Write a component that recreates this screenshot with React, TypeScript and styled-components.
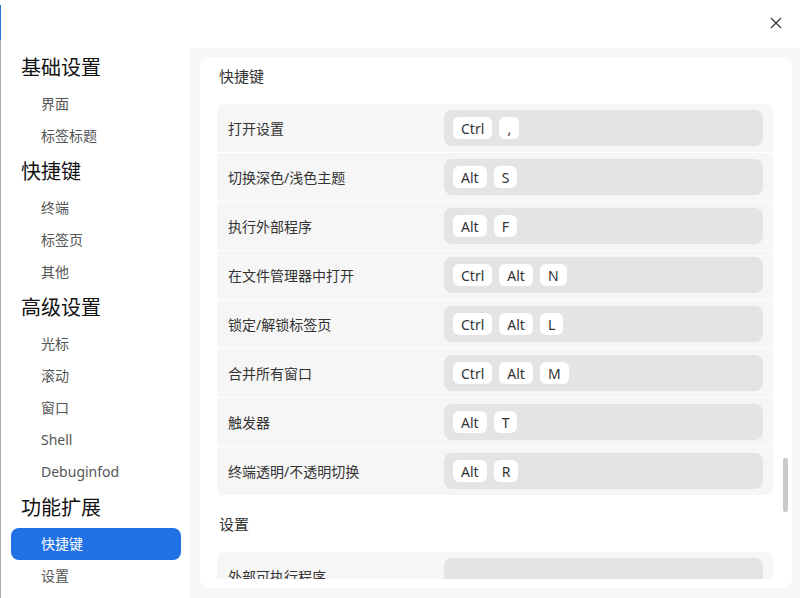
import styled, { createGlobalStyle } from 'styled-components';

const GlobalStyle = createGlobalStyle`
  html, body {
    margin: 0;
    padding: 0;
    height: 100%;
    overflow: hidden;
  }
  body {
    font-family: 'Noto Sans', 'Noto Sans CJK SC', sans-serif;
    color: #333;
  }
`;

const navGroups = [
  { title: '基础设置', items: ['界面', '标签标题'] },
  { title: '快捷键', items: ['终端', '标签页', '其他'] },
  { title: '高级设置', items: ['光标', '滚动', '窗口', 'Shell', 'Debuginfod'] },
  { title: '功能扩展', items: ['快捷键', '设置'] },
];

const shortcuts = [
  { label: '打开设置', keys: ['Ctrl', ','] },
  { label: '切换深色/浅色主题', keys: ['Alt', 'S'] },
  { label: '执行外部程序', keys: ['Alt', 'F'] },
  { label: '在文件管理器中打开', keys: ['Ctrl', 'Alt', 'N'] },
  { label: '锁定/解锁标签页', keys: ['Ctrl', 'Alt', 'L'] },
  { label: '合并所有窗口', keys: ['Ctrl', 'Alt', 'M'] },
  { label: '触发器', keys: ['Alt', 'T'] },
  { label: '终端透明/不透明切换', keys: ['Alt', 'R'] },
];

const App = () => {
  return (
    <Frame>
      <GlobalStyle />
      <Window>
        <TopBar>
          <CloseButton aria-label='close'>
            <svg width='12' height='12' viewBox='0 0 12 12'>
              <path d='M1 1 L11 11 M11 1 L1 11' stroke='#333' strokeWidth='1.2' fill='none' />
            </svg>
          </CloseButton>
        </TopBar>
        <Body>
          <Sidebar>
            {navGroups.map((group) => (
              <div key={group.title}>
                <NavHeader>{group.title}</NavHeader>
                {group.items.map((item) => (
                  <NavItem
                    key={item}
                    $active={group.title === '功能扩展' && item === '快捷键'}
                  >
                    {item}
                  </NavItem>
                ))}
              </div>
            ))}
          </Sidebar>
          <Content>
            <Panel>
              <ScrollArea>
                <Section>
                  <SectionTitle>快捷键</SectionTitle>
                  <Group>
                    {shortcuts.map((s) => (
                      <Row key={s.label}>
                        <RowLabel>{s.label}</RowLabel>
                        <KeyBox>
                          {s.keys.map((k, i) => (
                            <Kbd key={i}>{k}</Kbd>
                          ))}
                        </KeyBox>
                      </Row>
                    ))}
                  </Group>
                </Section>
                <Section>
                  <SectionTitle>设置</SectionTitle>
                  <Group>
                    <Row>
                      <RowLabel>外部可执行程序</RowLabel>
                      <KeyBox />
                    </Row>
                  </Group>
                </Section>
              </ScrollArea>
              <ScrollThumb />
            </Panel>
          </Content>
        </Body>
      </Window>
    </Frame>
  );
};

export default App;

const Frame = styled.div`
  height: 100vh;
  padding-left: 1px;
  box-sizing: border-box;
  background: linear-gradient(
    to bottom,
    #ffffff 0 5px,
    #2b6fd4 5px 40px,
    #a9a9a9 40px
  );
`;

const Window = styled.div`
  height: 100%;
  background: #fff;
  display: flex;
  flex-direction: column;
`;

const TopBar = styled.div`
  height: 48px;
  flex-shrink: 0;
  display: flex;
  align-items: center;
  justify-content: flex-end;
  padding-right: 13px;
`;

const CloseButton = styled.button`
  width: 22px;
  height: 22px;
  border: 0;
  padding: 0;
  background: transparent;
  display: flex;
  align-items: center;
  justify-content: center;
  margin-top: -2px;
`;

const Body = styled.div`
  flex: 1;
  display: flex;
  min-height: 0;
`;

const Sidebar = styled.nav`
  width: 189px;
  flex-shrink: 0;
  background: #fff;
`;

const NavHeader = styled.div`
  height: 40px;
  line-height: 40px;
  padding-left: 20px;
  font-size: 20px;
  color: #111;
`;

const NavItem = styled.div<{ $active?: boolean }>`
  height: 32px;
  line-height: 32px;
  margin: 0 9px 0 10px;
  padding-left: 30px;
  border-radius: 8px;
  font-size: 14px;
  color: ${(p) => (p.$active ? '#fff' : '#555')};
  background: ${(p) => (p.$active ? '#2070e6' : 'transparent')};
`;

const Content = styled.main`
  flex: 1;
  background: #f7f7f7;
  padding: 9px 8px 10px 10px;
  display: flex;
  min-width: 0;
`;

const Panel = styled.div`
  position: relative;
  flex: 1;
  background: #fff;
  border-radius: 8px;
  padding: 0 19px 9px 17px;
  display: flex;
  flex-direction: column;
`;

const ScrollArea = styled.div`
  flex: 1;
  overflow: hidden;
`;

const Section = styled.section`
  & + & {
    margin-top: 10px;
  }
`;

const SectionTitle = styled.div`
  font-size: 15px;
  line-height: 22px;
  color: #333;
  padding: 8px 0 0 2px;
  margin-bottom: 17px;
`;

const Group = styled.div`
  background: #f6f6f6;
  border-radius: 8px;
  display: flex;
  flex-direction: column;
  gap: 1px;
  overflow: hidden;
`;

const Row = styled.div`
  height: 48px;
  display: grid;
  grid-template-columns: 216px 1fr;
  align-items: center;
  padding: 0 10px 0 11px;
  background: #f6f6f6;
  box-shadow: 0 1px 0 #fff;
`;

const RowLabel = styled.div`
  font-size: 14px;
  color: #333;
`;

const KeyBox = styled.div`
  height: 36px;
  background: #e4e4e4;
  border-radius: 8px;
  display: flex;
  align-items: center;
  gap: 7px;
  padding-left: 9px;
`;

const Kbd = styled.span`
  height: 22px;
  min-width: 20px;
  box-sizing: border-box;
  padding: 0 8px;
  background: #fff;
  border-radius: 6px;
  display: inline-flex;
  align-items: center;
  justify-content: center;
  font-size: 14px;
  color: #333;
`;

const ScrollThumb = styled.div`
  position: absolute;
  right: 4px;
  top: 401px;
  width: 5px;
  height: 54px;
  border-radius: 3px;
  background: #c9c9c9;
`;
